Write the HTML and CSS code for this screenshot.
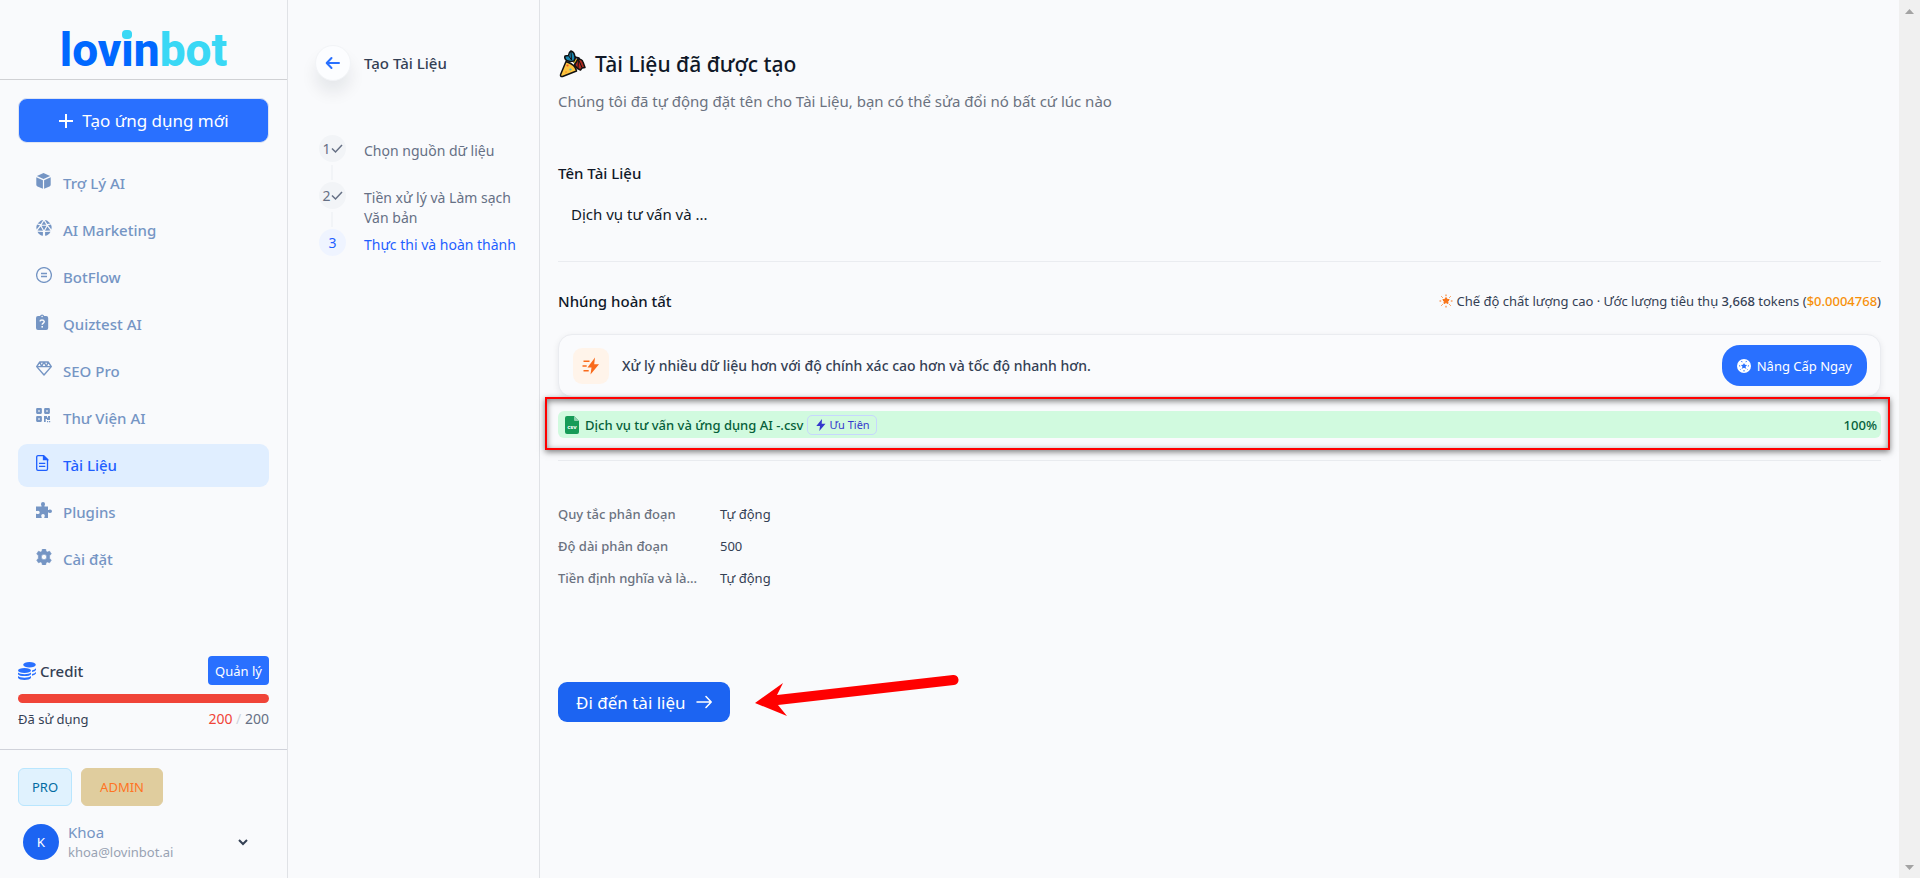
FILE: index.html
```html
<!DOCTYPE html>
<html lang="vi">
<head>
  <meta charset="utf-8">
  <title>Lovinbot - Tài Liệu</title>
  <link rel="stylesheet" href="styles.css">
</head>
<body>
  <aside class="sidebar">
    <a class="logo" href="#"><span class="logo-lovin">lov<span class="logo-i">i</span>n</span><span class="logo-bot">bot</span></a>

    <button class="create-btn" type="button">
      <svg width="16" height="16" viewBox="0 0 16 16" fill="none" stroke="#fff" stroke-width="2"><path d="M8 1v14M1 8h14"/></svg>
      Tạo ứng dụng mới
    </button>

    <nav class="menu">
      <a href="#">
        <svg width="16" height="16" viewBox="0 0 16 16"><path d="M7.500 0l6.600 3L7.500 6 .9 3zM.3 4.200l6.600 3v8.500l-5.400-2.200Q.3 13 .3 11.800zM14.700 4.200v7.600q0 1.200-1.200 1.700l-5.400 2.200V7.200z" fill="currentColor"/></svg>
        Trợ Lý AI
      </a>
      <a href="#">
        <svg width="16" height="16" viewBox="0 0 16 16"><path d="M5 .6L7.200 0 4.700 4 1.600 3.400zM11 .6L8.800 0l2.500 4 3.100-.6zM8 1l2.300 3.700H5.700zM1 4.600l3 .6L.6 9.500Q0 6.500 1 4.600zM15 4.600l-3 .6 3.400 4.300Q16 6.500 15 4.600zM5.500 5.700h5L8 10.200zM4.600 6.500L7 10.800l-5.500-.2zM11.400 6.500L9 10.800l5.500-.2zM1.500 11.800l5.400.2v3.800Q3.300 15.500 1.500 11.800zM14.500 11.800l-5.400.2v3.800q3.600-.3 5.400-4z" fill="currentColor"/></svg>
        AI Marketing
      </a>
      <a href="#">
        <svg width="16" height="16" viewBox="0 0 16 16" fill="none" stroke="currentColor"><circle cx="8" cy="8" r="7.400" stroke-width="1.300"/><path d="M5 6.600h6M5 9.400h6" stroke-width="1.500"/></svg>
        BotFlow
      </a>
      <a href="#">
        <svg width="16" height="16" viewBox="0 0 16 16"><path d="M2 2h2a2.200 2.200 0 0 1 4.200 0h2a2 2 0 0 1 2 2v10a2 2 0 0 1-2 2H2a2 2 0 0 1-2-2V4a2 2 0 0 1 2-2z" fill="currentColor"/><path d="M4 7.400Q4.200 5.900 6 5.900t2.300 1.700c0 1.500-2.100 1.400-2.100 3.100" fill="none" stroke="#f9fafc" stroke-width="1.500"/><rect x="5.400" y="12" width="1.600" height="1.600" fill="#f9fafc"/><circle cx="6.100" cy="2.500" r=".8" fill="#f9fafc"/></svg>
        Quiztest AI
      </a>
      <a href="#">
        <svg width="16" height="16" viewBox="0 0 16 16" fill="none" stroke="currentColor" stroke-width="1.400" stroke-linejoin="round"><path d="M3.800 1h8.400L15.300 5.600 8 14 .7 5.600zM.7 5.600h14.600M3.800 1L5.600 5.400 8 1l2.400 4.400L12.200 1"/></svg>
        SEO Pro
      </a>
      <a href="#">
        <svg width="16" height="16" viewBox="0 0 16 16"><path d="M1.200 1.200h3.600v3.600H1.200zM9.200 1.200h3.600v3.600H9.200zM1.200 9.200h3.600v3.600H1.200z" fill="none" stroke="currentColor" stroke-width="2.200" stroke-linejoin="round"/><path d="M8 8h3v1.500h1V8h2v4h-3v-1H9.700v3H8zM11 13h1.200v1.200H11zM13 13h1.200v1.200H13z" fill="currentColor"/></svg>
        Thư Viện AI
      </a>
      <a class="active" href="#">
        <svg width="16" height="16" viewBox="0 0 16 16" fill="none" stroke="currentColor" stroke-width="1.300"><path d="M7.500.7H2A1.300 1.300 0 0 0 .7 2v12A1.300 1.300 0 0 0 2 15.300h8.200a1.300 1.300 0 0 0 1.300-1.300V4.500zM3 8.300h6.300M3 11.300h6.300"/><path d="M7.500.7v3.800h4z" fill="currentColor"/></svg>
        Tài Liệu
      </a>
      <a href="#">
        <svg width="16" height="16" viewBox="0 0 16 16"><path d="M0 4.600h5.500c.3-.8-.5-1.300-.5-2.600a2 2 0 0 1 4 0c0 1.300-.8 1.800-.5 2.600H12V8c.8.400 1.100-.5 2.200-.5a1.700 1.700 0 0 1 0 3.600c-1.100 0-1.400-.9-2.200-.5V16H8.400c-.4-.9.400-1.200.4-2.200a1.800 1.800 0 0 0-3.600 0c0 1 .8 1.300.4 2.200H0v-4.200c.9-.4 1.200.3 2 .3A1.700 1.700 0 0 0 2 8.700c-.8 0-1.100.7-2 .3z" fill="currentColor"/></svg>
        Plugins
      </a>
      <a href="#">
        <svg width="16" height="16" viewBox="0 0 16 16"><path fill-rule="evenodd" d="M6.400 0h3.200l.5 2.200 1.300.8 2.200-.8L15.300 5l-1.700 1.600v2.800l1.700 1.600-1.700 2.800-2.200-.8-1.300.8-.5 2.200H6.400l-.5-2.200-1.300-.8-2.200.8L.7 11l1.700-1.600V6.600L.7 5l1.700-2.800 2.200.8 1.300-.8zM8 5.300a2.700 2.700 0 1 0 0 5.400 2.700 2.700 0 0 0 0-5.400z" fill="currentColor" stroke="currentColor" stroke-width=".6" stroke-linejoin="round"/></svg>
        Cài đặt
      </a>
    </nav>

    <div class="credit">
      <div class="credit-head">
        <svg width="18" height="18" viewBox="0 0 18 18" fill="#2970ff"><ellipse cx="11.500" cy="2.800" rx="6.300" ry="2.800"/><ellipse cx="6.500" cy="8.600" rx="6.500" ry="2.500"/><path d="M0 10.500c2 2.200 11 2.200 13 0v1.700c-1 2.500-12 2.500-13 0zM0 14c2 2.200 11 2.200 13 0v1.700c-1 3-12 3-13 0zM14 8.400q3-.7 4-2.100v1.600q-.8 1.500-4 2.200zM14 12q3-.7 4-2.100v1.600q-.8 1.500-4 2.200z"/></svg>
        <span class="credit-title">Credit</span>
        <button class="manage-btn" type="button">Quản lý</button>
      </div>
      <div class="credit-bar"><div class="credit-fill" style="width: 100%"></div></div>
      <div class="credit-usage">
        <span>Đã sử dụng</span>
        <span class="credit-count"><span class="used">200</span> <span class="slash">/</span> 200</span>
      </div>
    </div>

    <div class="account">
      <div class="badges">
        <span class="badge pro">PRO</span>
        <span class="badge admin">ADMIN</span>
      </div>
      <button class="user" type="button">
        <span class="avatar">K</span>
        <span class="user-info">
          <span class="user-name">Khoa</span>
          <span class="user-email">khoa@lovinbot.ai</span>
        </span>
        <svg width="10" height="10" viewBox="0 0 10 10" fill="none" stroke="#344054" stroke-width="2"><path d="M1 3l4 4 4-4"/></svg>
      </button>
    </div>
  </aside>

  <section class="steps">
    <div class="steps-head">
      <button class="back-btn" type="button" aria-label="Quay lại">
        <svg width="16" height="16" viewBox="0 0 16 16" fill="none" stroke="#2970ff" stroke-width="2" stroke-linecap="round" stroke-linejoin="round"><path d="M14 8H2M6.500 3L1.700 8l4.800 5"/></svg>
      </button>
      <h2>Tạo Tài Liệu</h2>
    </div>
    <ol class="step-list">
      <li>
        <span class="step-num">1<svg width="12" height="12" viewBox="0 0 12 12" fill="none" stroke="#667085" stroke-width="1.500"><path d="M1 5.500l3.500 3.500L11 2"/></svg></span>
        <span class="step-text">Chọn nguồn dữ liệu</span>
      </li>
      <li>
        <span class="step-num">2<svg width="12" height="12" viewBox="0 0 12 12" fill="none" stroke="#667085" stroke-width="1.500"><path d="M1 5.500l3.500 3.500L11 2"/></svg></span>
        <span class="step-text">Tiền xử lý và Làm sạch Văn bản</span>
      </li>
      <li class="current">
        <span class="step-num">3</span>
        <span class="step-text">Thực thi và hoàn thành</span>
      </li>
    </ol>
  </section>

  <main class="content">
    <h1>
      <svg width="28" height="28" viewBox="0 0 28 28" stroke="#111" stroke-width="1.500" stroke-linejoin="round">
        <path d="M14 10l3-3 4 1 1 4-4 2z" fill="#5a3fa0"/>
        <path d="M14.500 11.500l4-3 1.500 2-2.500 3z" fill="#f5d327" stroke="none"/>
        <path d="M8.500 10.500Q6 8 7 6l3.500-.5q0-3 2.500-4.500 3 1 3.500 4 1.500 3-.5 6l-4 .5z" fill="#1c86ad"/>
        <path d="M13 1.500l.5 8.500M10.500 5.500l3 4.500" fill="none" stroke-width="1"/>
        <path d="M16.500 15l3.500-6q4 0 5 3l2 5.500-3 .5-1.500 2-3-1.500z" fill="#b02a20"/>
        <path d="M20.500 9.500l-.5 9M20.500 9.500l3.500 8" fill="none" stroke-width="1"/>
        <path d="M8 11.500L2.600 24.500q-.6 2.600 2 2L18.500 21q-1-6.500-10.500-9.500z" fill="#fdc43f"/>
        <circle cx="12.500" cy="19.500" r="1.100" fill="#3db9c9" stroke="none"/><circle cx="8" cy="22" r="1" fill="#f7a02b" stroke="none"/><circle cx="9.500" cy="15.500" r="1.100" fill="#e8592d" stroke="none"/>
      </svg>
      Tài Liệu đã được tạo
    </h1>
    <p class="subtitle">Chúng tôi đã tự động đặt tên cho Tài Liệu, bạn có thể sửa đổi nó bất cứ lúc nào</p>

    <div class="name-group">
      <label for="docName">Tên Tài Liệu</label>
      <input type="text" id="docName" value="Dịch vụ tư vấn và ...">
    </div>

    <div class="embed-head">
      <h3>Nhúng hoàn tất</h3>
      <div class="estimate">
        <svg width="14" height="14" viewBox="0 0 14 14" stroke="#f97316" stroke-width="1"><path d="M7 3.500l1.100 1.800 2.100.4-1.400 1.600.2 2.200-2-.9-2 .9.200-2.200-1.400-1.600 2.100-.4z" fill="#f97316"/><path d="M7 .5v1.700M7 11.800v1.700M.5 7h1.700M11.800 7h1.700M2.400 2.400l1.200 1.200M10.400 10.400l1.200 1.200M2.400 11.600l1.200-1.200M10.400 3.600l1.200-1.200"/></svg>
        <span>Chế độ chất lượng cao · Ước lượng tiêu thụ <b>3,668</b> tokens (<span class="price">$0.0004768</span>)</span>
      </div>
    </div>

    <div class="upgrade">
      <span class="upgrade-icon">
        <svg width="18" height="18" viewBox="0 0 18 18" fill="#f96a1b"><path d="M13 .5L5.500 10.500h4l-1 7L17 7.300h-4.800z"/><path d="M1.500 3.500h6v1.600h-6zM.5 8.200h4.200v1.600H.5zM1.500 13h5.200v1.600H1.500z"/></svg>
      </span>
      <span class="upgrade-text">Xử lý nhiều dữ liệu hơn với độ chính xác cao hơn và tốc độ nhanh hơn.</span>
      <button class="upgrade-btn" type="button">
        <svg width="14" height="14" viewBox="0 0 14 14"><circle cx="7" cy="7" r="7" fill="#fff"/><path d="M7 3.900l1 1.900 2.100.3-1.500 1.500.4 2.100-2-1-2 1 .4-2.100-1.500-1.500L6 5.800z" fill="#2970ff"/><path d="M4.500 2l.6 1.200M9.500 2l-.6 1.200M2 6.700l1.200.4M12 6.700l-1.200.4M7 11v1.500M3.500 10.500l.7-.6M10.500 10.500l-.7-.6" stroke="#2970ff" stroke-width="1"/></svg>
        Nâng Cấp Ngay
      </button>
    </div>

    <div class="file-row">
      <svg width="14" height="18" viewBox="0 0 14 18"><path d="M2 0h7l5 5v11a2 2 0 0 1-2 2H2a2 2 0 0 1-2-2V2a2 2 0 0 1 2-2z" fill="#169b57"/><path d="M9 0l5 5h-4a1 1 0 0 1-1-1z" fill="#8fd0ae"/><text x="7" y="13" text-anchor="middle" class="csv">csv</text></svg>
      <span class="file-name">Dịch vụ tư vấn và ứng dụng AI -.csv</span>
      <span class="priority">
        <svg width="10" height="12" viewBox="0 0 10 12" fill="#3538cd"><path d="M6 0L.3 7H4l-.7 5L9.500 4.800H5.700z"/></svg>
        Ưu Tiên
      </span>
      <span class="file-percent">100%</span>
    </div>

    <dl class="rules">
      <dt>Quy tắc phân đoạn</dt><dd>Tự động</dd>
      <dt>Độ dài phân đoạn</dt><dd>500</dd>
      <dt>Tiền định nghĩa và là...</dt><dd>Tự động</dd>
    </dl>

    <div class="actions">
      <button class="go-btn" type="button">
        Đi đến tài liệu
        <svg width="16" height="16" viewBox="0 0 16 16" fill="none" stroke="#fff" stroke-width="1.500" stroke-linecap="round" stroke-linejoin="round"><path d="M1 8h14M10 2.500L15.200 8 10 13.500"/></svg>
      </button>
      <svg class="arrow" width="208" height="44" viewBox="0 0 208 44"><path d="M0 29L28 9l-6 12L198 1a5 5 0 0 1 1 10L23 31l9 11z" fill="#f00"/></svg>
    </div>
  </main>

  <div class="scrollbar">
    <svg width="9" height="5" viewBox="0 0 9 5" fill="#a3a3a3"><path d="M4.500 0L9 5H0z"/></svg>
    <svg width="9" height="5" viewBox="0 0 9 5" fill="#a3a3a3"><path d="M4.500 5L9 0H0z"/></svg>
  </div>
</body>
</html>
```
FILE: styles.css
```css
* {
  box-sizing: border-box;
}

body {
  display: flex;
  height: 100vh;
  margin: 0;
  font-family: "Noto Sans", sans-serif;
  font-size: 13px;
  line-height: 20px;
  color: #344054;
  background-color: #f9fafc;
}

svg {
  flex-shrink: 0;
}

button {
  font-family: inherit;
  border: none;
  cursor: pointer;
}

a {
  text-decoration: none;
}

/* sidebar */
.sidebar {
  display: flex;
  flex-direction: column;
  flex-shrink: 0;
  width: 288px;
  border-right: 1px solid #e0e2e6;
}

.logo {
  display: flex;
  justify-content: center;
  height: 80px;
  padding-top: 20px;
  border-bottom: 1px solid #d0d1d4;
  font-family: Roboto, sans-serif;
  font-size: 46px;
  font-weight: 800;
  line-height: 60px;
}

.logo-lovin {
  color: #0068ff;
}

.logo-bot {
  color: #3ad8f5;
}

.logo-i {
  position: relative;
}

.logo-i::after {
  content: "";
  position: absolute;
  top: 7px;
  left: 1px;
  width: 10px;
  height: 9px;
  border-radius: 4px;
  background-color: #3ad8f5;
}

.create-btn {
  display: flex;
  align-items: center;
  justify-content: center;
  gap: 8px;
  height: 45px;
  margin: 18px 18px 19px;
  font-size: 17px;
  color: #fff;
  border: 1px solid #dfe5f2;
  border-radius: 9px;
  background-color: #2970ff;
}

.menu {
  display: flex;
  flex-direction: column;
  gap: 4px;
  padding: 0 18px;
}

.menu a {
  display: flex;
  align-items: center;
  gap: 11px;
  height: 43px;
  padding: 0 18px 2px;
  font-size: 15px;
  font-weight: 500;
  color: #7595c4;
  border-radius: 9px;
}

.menu a svg {
  margin-bottom: 4px;
}

.menu a.active {
  color: #1f5fff;
  background-color: #e0eeff;
}

.credit {
  margin-top: auto;
  padding: 0 18px 20px;
  border-bottom: 1px solid #d0d2da;
}

.credit-head {
  display: flex;
  align-items: center;
  gap: 4px;
  margin-bottom: 9px;
}

.credit-title {
  font-size: 15px;
  font-weight: 500;
}

.manage-btn {
  height: 29px;
  margin-left: auto;
  padding: 0 7px;
  font-size: 13px;
  color: #fff;
  border-radius: 4px;
  background-color: #2970ff;
}

.credit-bar {
  height: 9px;
  border-radius: 5px;
  background-color: #eaecf0;
  overflow: hidden;
}

.credit-fill {
  height: 100%;
  background-color: #f04438;
}

.credit-usage {
  display: flex;
  justify-content: space-between;
  margin-top: 6px;
}

.credit-count {
  font-size: 14px;
  color: #667085;
}

.used {
  color: #f04438;
}

.slash {
  color: #d0d5dd;
}

.account {
  padding: 18px 18px 16px;
}

.badges {
  display: flex;
  gap: 9px;
  margin-bottom: 16px;
}

.badge {
  height: 38px;
  padding: 0 13px;
  line-height: 36px;
  border: 1px solid #b9e6fe;
  border-radius: 6px;
}

.badge.pro {
  color: #026aa2;
  background-color: #e0f2fe;
}

.badge.admin {
  padding: 0 18px;
  color: #ff7324;
  border-color: #e0cd9e;
  background-color: #e0cd9e;
}

.user {
  display: flex;
  align-items: center;
  width: 100%;
  padding: 0 21px 0 5px;
  text-align: left;
  background: none;
}

.avatar {
  width: 36px;
  height: 36px;
  margin-right: 9px;
  line-height: 36px;
  text-align: center;
  color: #fff;
  border-radius: 50%;
  background-color: #1c64f2;
}

.user-info {
  flex: 1;
}

.user-name,
.user-email {
  display: block;
  line-height: 20px;
}

.user-name {
  font-size: 15px;
  color: #7595c4;
}

.user-email {
  font-size: 13px;
  color: #98a2b3;
}

/* steps column */
.steps {
  flex-shrink: 0;
  width: 252px;
  padding: 45px 18px 0 27px;
  border-right: 1px solid #e0e2e6;
}

.steps-head {
  display: flex;
  align-items: center;
  gap: 13px;
  margin-bottom: 54px;
}

.back-btn {
  display: flex;
  align-items: center;
  justify-content: center;
  width: 36px;
  height: 36px;
  padding: 0;
  border: 1px solid #f2f4f7;
  border-radius: 50%;
  background-color: #fcfdff;
  box-shadow: 0 12px 16px rgba(16, 24, 40, 0.08);
}

.steps-head h2 {
  margin: 0;
  font-size: 15px;
  font-weight: 500;
}

.step-list {
  margin: 0;
  padding: 0 0 0 4px;
  list-style: none;
}

.step-list li {
  position: relative;
  display: flex;
  gap: 18px;
  min-height: 47px;
  font-size: 14px;
  color: #667085;
}

.step-list li:not(:last-child)::after {
  content: "";
  position: absolute;
  top: 30px;
  left: 12px;
  width: 2px;
  height: 15px;
  background-color: #f2f4f7;
}

.step-num {
  display: flex;
  flex-shrink: 0;
  align-items: center;
  justify-content: center;
  width: 27px;
  height: 27px;
  border-radius: 50%;
  background-color: #f2f4f7;
}

.step-text {
  padding-top: 6px;
}

.step-list .current {
  color: #1f5fff;
}

.current .step-num {
  background-color: #eff4ff;
}

/* content */
.content {
  flex: 1;
  padding: 46px 18px 0;
}

h1 {
  display: flex;
  align-items: center;
  gap: 9px;
  height: 36px;
  margin: 0;
  font-size: 21px;
  font-weight: 500;
  color: #101828;
}

.subtitle {
  margin: 9px 0 0;
  font-size: 15px;
  color: #6b7280;
}

.name-group {
  margin-top: 52px;
  padding-bottom: 29px;
  border-bottom: 1px solid #eaecf0;
}

.name-group label {
  display: block;
  font-size: 15px;
  font-weight: 500;
  color: #101828;
}

.name-group input {
  width: 100%;
  height: 36px;
  margin-top: 13px;
  padding: 0 12px;
  font-family: inherit;
  font-size: 15px;
  color: #101828;
  border: 1px solid transparent;
  background-color: transparent;
}

.embed-head {
  display: flex;
  align-items: center;
  justify-content: space-between;
  margin: 29px 0 23px;
}

.embed-head h3 {
  margin: 0;
  font-size: 15px;
  font-weight: 500;
  color: #101828;
}

.estimate {
  display: flex;
  align-items: center;
  gap: 4px;
}

.estimate b {
  font-weight: 500;
}

.price {
  font-weight: 500;
  color: #f79009;
}

.upgrade {
  display: flex;
  align-items: center;
  height: 63px;
  padding: 0 13px 0 14px;
  border: 1px solid #eaecf0;
  border-radius: 14px;
  background-color: #fafbfd;
  box-shadow: 0 2px 6px rgba(16, 24, 40, 0.08);
}

.upgrade-icon {
  display: flex;
  align-items: center;
  justify-content: center;
  width: 36px;
  height: 36px;
  margin-right: 13px;
  border-radius: 9px;
  background-color: #fff4ea;
}

.upgrade-text {
  flex: 1;
  font-size: 14px;
  font-weight: 500;
}

.upgrade-btn {
  display: flex;
  align-items: center;
  gap: 6px;
  height: 41px;
  padding: 0 15px;
  font-size: 13px;
  color: #fff;
  border-radius: 18px;
  background-color: #2970ff;
}

.file-row {
  position: relative;
  display: flex;
  align-items: center;
  height: 27px;
  margin-top: 14px;
  padding: 0 4px 0 7px;
  font-size: 13px;
  font-weight: 500;
  color: #05603a;
  border-radius: 6px;
  background-color: #d1fadf;
}

/* red frame around the finished file */
.file-row::after {
  content: "";
  position: absolute;
  inset: -14px -9px -12px -13px;
  border: 2px solid #f00;
  box-shadow: 0 2px 6px rgba(0, 0, 0, 0.5), inset 0 2px 6px rgba(0, 0, 0, 0.5);
}

.csv {
  font-size: 6px;
  font-weight: 700;
  fill: #fff;
}

.file-name {
  margin: 0 4px 0 6px;
}

.priority {
  display: flex;
  align-items: center;
  gap: 3px;
  height: 20px;
  padding: 0 6px 0 8px;
  font-size: 11px;
  font-weight: 400;
  color: #3538cd;
  border: 1px solid #c7d7fe;
  border-radius: 5px;
}

.file-percent {
  margin-left: auto;
}

.rules {
  display: grid;
  grid-template-columns: 140px 1fr;
  column-gap: 22px;
  row-gap: 12px;
  margin: 22px 0 0;
  padding-top: 43px;
  border-top: 1px solid #eaecf0;
}

.rules dt {
  font-weight: 500;
  color: #6b7280;
  white-space: nowrap;
}

.rules dd {
  margin: 0;
}

.actions {
  position: relative;
  margin-top: 94px;
}

.go-btn {
  display: flex;
  align-items: center;
  gap: 10px;
  height: 40px;
  padding: 0 18px;
  font-size: 17px;
  color: #fff;
  border-radius: 9px;
  background-color: #1c64f2;
}

.arrow {
  position: absolute;
  top: -8px;
  left: 197px;
}

.scrollbar {
  display: flex;
  flex-direction: column;
  align-items: center;
  justify-content: space-between;
  flex-shrink: 0;
  width: 21px;
  padding: 9px 0 8px;
  background-color: #f0f0f0;
}
```
